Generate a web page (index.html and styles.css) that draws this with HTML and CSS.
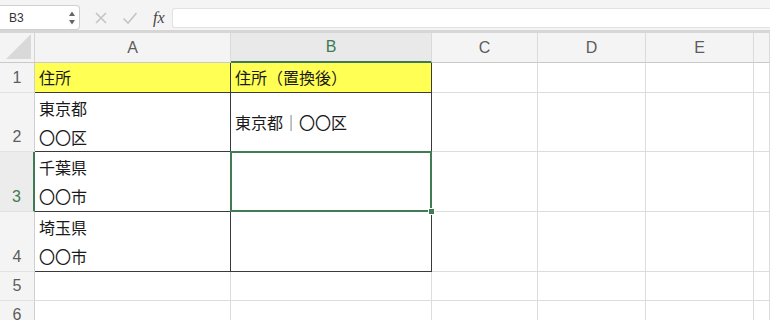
FILE: index.html
```html
<!DOCTYPE html>
<html lang="ja">

<head>
    <meta charset="UTF-8">
    <meta name="viewport" content="width=device-width, initial-scale=1.0">
    <title>Sheet</title>
    <link rel="stylesheet" href="styles.css">
</head>

<body>
    <div class="formula-bar">
        <div class="name-box">
            <span class="name-text">B3</span>
            <span class="spinner">
                <svg width="8" height="16" viewBox="0 0 8 16">
                    <path d="M1 6 L4 1.5 L7 6 Z" fill="#666" />
                    <path d="M1 10 L4 14.5 L7 10 Z" fill="#666" />
                </svg>
            </span>
        </div>
        <div class="bar-icons">
            <svg class="icon" width="14" height="14" viewBox="0 0 14 14">
                <path d="M2 2 L12 12 M12 2 L2 12" stroke="#c4c4c4" stroke-width="1.6" fill="none" />
            </svg>
            <svg class="icon" width="16" height="14" viewBox="0 0 16 14">
                <path d="M1.5 7.5 L6 12 L14.5 2" stroke="#c4c4c4" stroke-width="1.6" fill="none" />
            </svg>
            <span class="fx">fx</span>
        </div>
        <div class="formula-input"></div>
    </div>

    <div class="sheet">
        <!-- header row -->
        <div class="corner"><span class="corner-tri"></span></div>
        <div class="col-head">A</div>
        <div class="col-head active">B</div>
        <div class="col-head">C</div>
        <div class="col-head">D</div>
        <div class="col-head">E</div>
        <div class="col-head"></div>

        <!-- row 1 -->
        <div class="row-head">1</div>
        <div class="cell yellow dark-b dark-r">住所</div>
        <div class="cell yellow dark-b dark-r">住所（置換後）</div>
        <div class="cell"></div>
        <div class="cell"></div>
        <div class="cell"></div>
        <div class="cell"></div>

        <!-- row 2 -->
        <div class="row-head">2</div>
        <div class="cell multi dark-b dark-r">東京都<br>〇〇区</div>
        <div class="cell middle dark-b dark-r">東京都<span class="sep">｜</span>〇〇区</div>
        <div class="cell"></div>
        <div class="cell"></div>
        <div class="cell"></div>
        <div class="cell"></div>

        <!-- row 3 -->
        <div class="row-head active">3</div>
        <div class="cell multi dark-b dark-r">千葉県<br>〇〇市</div>
        <div class="cell dark-b dark-r selected"><span class="handle"></span></div>
        <div class="cell"></div>
        <div class="cell"></div>
        <div class="cell"></div>
        <div class="cell"></div>

        <!-- row 4 -->
        <div class="row-head">4</div>
        <div class="cell multi dark-b dark-r">埼玉県<br>〇〇市</div>
        <div class="cell dark-b dark-r"></div>
        <div class="cell"></div>
        <div class="cell"></div>
        <div class="cell"></div>
        <div class="cell"></div>

        <!-- row 5 -->
        <div class="row-head">5</div>
        <div class="cell"></div>
        <div class="cell"></div>
        <div class="cell"></div>
        <div class="cell"></div>
        <div class="cell"></div>
        <div class="cell"></div>

        <!-- row 6 -->
        <div class="row-head">6</div>
        <div class="cell"></div>
        <div class="cell"></div>
        <div class="cell"></div>
        <div class="cell"></div>
        <div class="cell"></div>
        <div class="cell"></div>
    </div>
</body>

</html>
```

FILE: styles.css
```css
* {
    box-sizing: border-box;
}

body {
    margin: 0;
    font-family: "Liberation Sans", Arial, sans-serif;
    background-color: #ffffff;
    overflow: hidden;
    width: 770px;
    height: 320px;
}

.formula-bar {
    height: 33px;
    display: flex;
    align-items: flex-start;
    background-color: #f4f4f4;
    border-bottom: 3px solid #d6d6d6;
    padding-top: 5px;
}

.name-box {
    width: 80px;
    height: 25px;
    background-color: #ffffff;
    border: 1px solid #cfcfcf;
    border-left: none;
    border-radius: 0 4px 4px 0;
    display: flex;
    align-items: center;
    justify-content: space-between;
    padding: 0 3px 0 9px;
}

.name-text {
    font-size: 12px;
    color: #333333;
}

.spinner {
    display: flex;
    align-items: center;
}

.bar-icons {
    display: flex;
    align-items: center;
    height: 25px;
    gap: 14px;
    padding-left: 14px;
    width: 92px;
}

.fx {
    font-family: "Liberation Serif", "Times New Roman", serif;
    font-style: italic;
    font-size: 16px;
    color: #444444;
    margin-left: 1px;
}

.formula-input {
    flex: 1;
    margin-top: 3px;
    height: 20px;
    background-color: #ffffff;
    border-top: 1px solid #e2e2e2;
    border-bottom: 1px solid #e2e2e2;
    border-left: 1px solid #e2e2e2;
    border-radius: 3px 0 0 3px;
}

.sheet {
    display: grid;
    grid-template-columns: 35px 196px 201px 106px 108px 108px 1fr;
    grid-template-rows: 30px 30px 59px 60px 60px 29px 29px;
}

.corner {
    background-color: #f4f4f4;
    border-right: 1px solid #d4d4d4;
    border-bottom: 1px solid #c9c9c9;
    position: relative;
}

.corner-tri {
    position: absolute;
    right: 3px;
    bottom: 3px;
    width: 0;
    height: 0;
    border-left: 25px solid transparent;
    border-bottom: 25px solid #d9d9d9;
}

.col-head {
    background-color: #f4f4f4;
    border-right: 1px solid #dadada;
    border-bottom: 1px solid #c9c9c9;
    display: flex;
    align-items: center;
    justify-content: center;
    font-size: 16px;
    color: #5c5c5c;
}

.col-head.active {
    background-color: #e9e9e9;
    color: #3d7b52;
    border-bottom: 2px solid #3f7a54;
}

.row-head {
    background-color: #f4f4f4;
    border-right: 1px solid #cfcfcf;
    border-bottom: 1px solid #e2e2e2;
    display: flex;
    align-items: flex-end;
    justify-content: center;
    font-size: 16px;
    line-height: 29px;
    color: #5c5c5c;
}

.row-head.active {
    background-color: #ececec;
    color: #3d7b52;
    border-right: 2px solid #3f7a54;
}

.cell {
    border-right: 1px solid #dcdcdc;
    border-bottom: 1px solid #dcdcdc;
    font-family: "Noto Sans CJK JP", sans-serif;
    font-size: 16px;
    color: #1a1a1a;
    padding-left: 4px;
    line-height: 29px;
    white-space: nowrap;
}

.cell.yellow {
    background-color: #ffff54;
}

.cell.dark-r {
    border-right-color: #3a3a3a;
}

.cell.dark-b {
    border-bottom-color: #3a3a3a;
}

.cell.multi {
    line-height: 29px;
    padding-top: 1px;
}

.cell.middle {
    display: flex;
    align-items: center;
}

.sep {
    color: #555555;
}

.cell.selected {
    position: relative;
}

.cell.selected::after {
    content: "";
    position: absolute;
    top: -1px;
    left: -1px;
    right: -1px;
    bottom: -1px;
    border: 2px solid #417c56;
}

.handle {
    position: absolute;
    right: -4px;
    bottom: -4px;
    width: 7px;
    height: 7px;
    background-color: #417c56;
    border: 1px solid #ffffff;
    z-index: 2;
}
```
